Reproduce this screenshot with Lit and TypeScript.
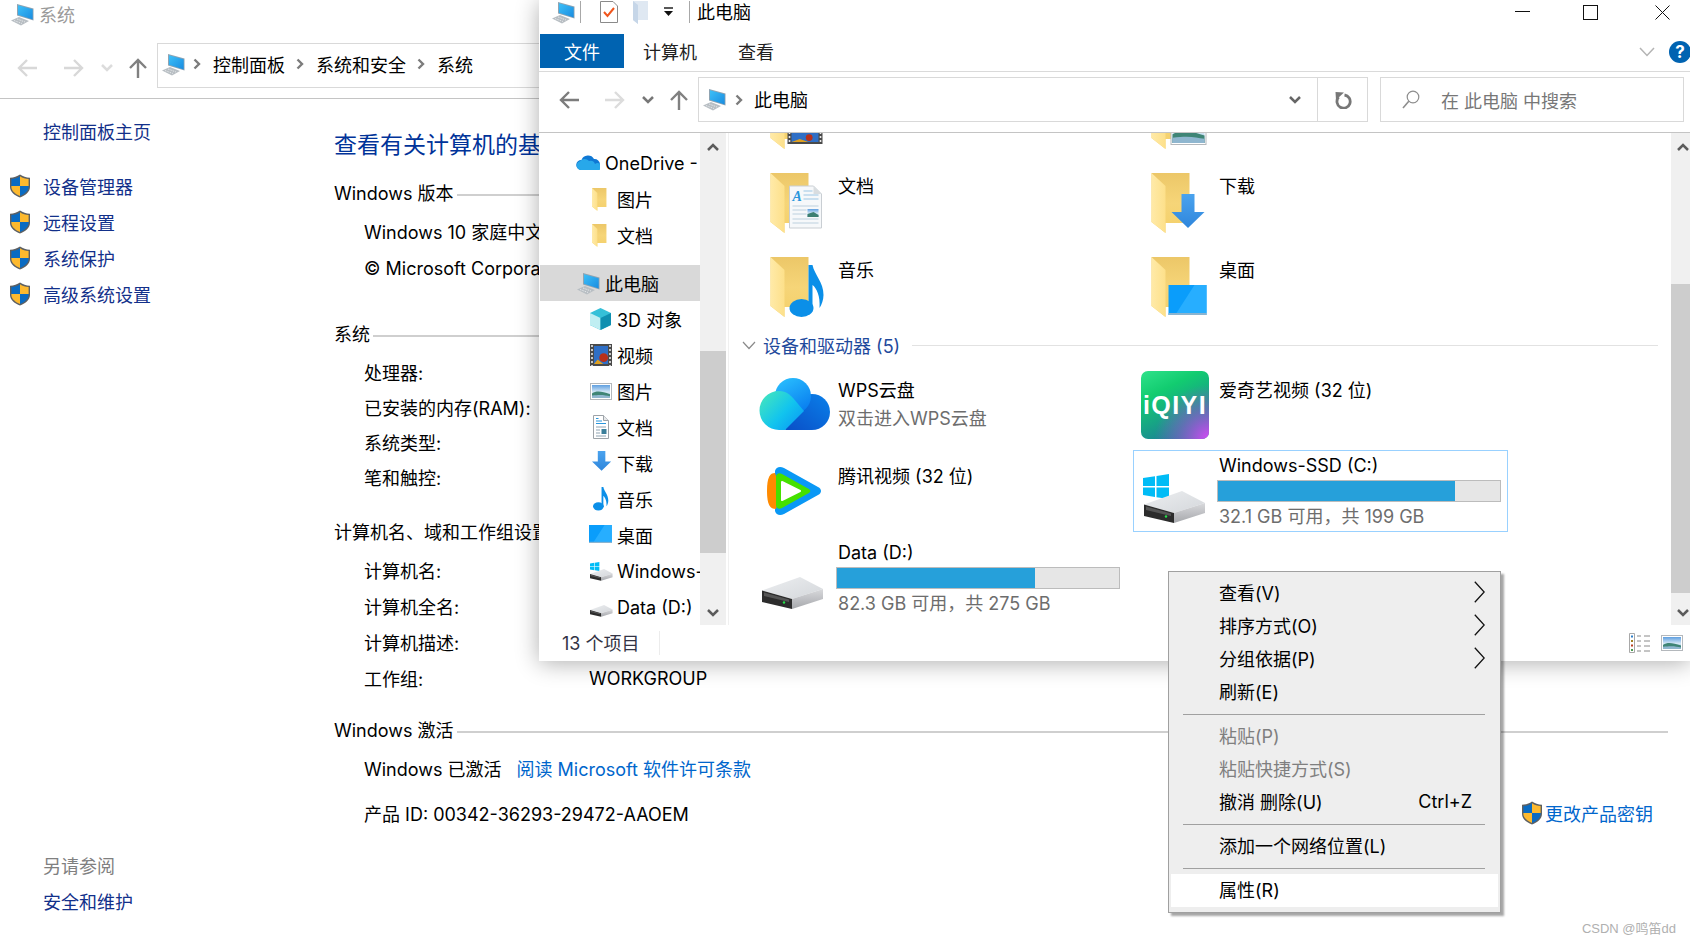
import { LitElement, html, css, svg } from 'lit';
import { customElement } from 'lit/decorators.js';

// ---- small svg pieces ----

const folderShape = (x: number, y: number, s = 1) => svg`
  <g transform="translate(${x} ${y}) scale(${s})">
    <path d="M0 0H38V50H14V60L0 49Z" fill="url(#folderBack)"/>
    <path d="M0 0L14 13V60L0 49Z" fill="url(#folderFlap)"/>
  </g>`;

const pageShape = (x: number, y: number, s = 1) => svg`
  <g transform="translate(${x} ${y}) scale(${s})">
    <path d="M0 0H24L32 8V42H0Z" fill="#f6f8fa" stroke="#c9ced3" stroke-width="1"/>
    <path d="M24 0V8H32Z" fill="#d9dde0"/>
    <text x="3" y="15" font-family="Liberation Serif" font-style="italic" font-weight="700" font-size="14" fill="#2a96dc">A</text>
    <path d="M14 5H23M14 9H29M14 13H29" stroke="#9cc6e4" stroke-width="1.2"/>
    <path d="M3 20H29M3 33H29M3 37H29" stroke="#bcd0de" stroke-width="1.2"/>
    <path d="M3 24H17M3 28H17" stroke="#bcd0de" stroke-width="1.2"/>
    <rect x="18" y="23" width="11" height="8" fill="url(#sky)"/>
    <path d="M18 28 L24 26 L29 29 V31 H18Z" fill="#3c7f72"/>
  </g>`;

const smallDoc = svg`
  <path d="M4.5 .5H14.5L19.5 5.5V23.5H4.5Z" fill="#fff" stroke="#9da3a8"/>
  <path d="M14.5 .5V5.5H19.5" fill="#e6e8ea" stroke="#9da3a8"/>
  <path d="M7 3.5H9.5M7 6H13M7 8.5H17" stroke="#2a96dc" stroke-width="1.2"/>
  <path d="M7 12H17M7 15H11M7 18H11M7 21H17" stroke="#8fa3b2" stroke-width="1"/>
  <rect x="12.5" y="14" width="5" height="5" fill="#3c7f9a"/>`;

const noteShape = (x: number, y: number, s = 1) => svg`
  <g transform="translate(${x} ${y}) scale(${s})">
    <ellipse cx="12" cy="43" rx="12" ry="9" fill="#0b8fe8"/>
    <path d="M19 43V0H23C25 10 34 17 34 30C34 35 32 40 30 43C31 31 27 23 23 20V43Z" fill="#0b8fe8"/>
  </g>`;

const arrowShape = (x: number, y: number, s = 1) => svg`
  <g transform="translate(${x} ${y}) scale(${s})">
    <path d="M10 0H23V18H33L16.5 34L0 18H10Z" fill="url(#arrowBlue)"/>
  </g>`;

const desktopShape = (x: number, y: number, s = 1) => svg`
  <g transform="translate(${x} ${y}) scale(${s})">
    <rect x="0" y="0" width="38" height="30" fill="#0a9dfb"/>
    <path d="M8 28L26 0H38V28Z" fill="#27aeff"/>
    <rect x="0" y="28" width="38" height="2" fill="#8ab4d0"/>
  </g>`;

const filmShape = (x: number, y: number, w: number, h: number) => svg`
  <g transform="translate(${x} ${y})">
    <rect width=${w} height=${h} fill="#4a4a4a"/>
    <rect x="4" y="2" width=${w - 8} height=${h - 4} fill="#2f6fc6"/>
    <path d="M4 ${h - 2}L${w * 0.35} ${h * 0.7}L${w * 0.6} ${h - 2}Z" fill="#e0a020"/>
    <circle cx=${w * 0.62} cy=${h * 0.62} r=${h * 0.2} fill="#b8301a"/>
    <path d="M2 1V${h} M${w - 2} 1V${h}" stroke="#e8e8e8" stroke-width="1.6" stroke-dasharray="2 2"/>
  </g>`;

const pictureShape = (x: number, y: number, w: number, h: number) => svg`
  <g transform="translate(${x} ${y})">
    <rect x=".5" y=".5" width=${w - 1} height=${h - 1} fill="#fff" stroke="#b4b8bc"/>
    <rect x="2" y="2" width=${w - 4} height=${h - 4} fill="url(#sky)"/>
    <path d="M2 ${h * 0.62}C${w * 0.3} ${h * 0.42} ${w * 0.55} ${h * 0.5} ${w - 2} ${h * 0.66}V${h - 2}H2Z" fill="#3f8576"/>
    <path d="M2 ${h * 0.74}C${w * 0.5} ${h * 0.66} ${w * 0.7} ${h * 0.72} ${w - 2} ${h * 0.78}V${h - 2}H2Z" fill="#8fb6cf"/>
  </g>`;

const driveShape = (x: number, y: number, s = 1, led = true) => svg`
  <g transform="translate(${x} ${y}) scale(${s})">
    <path d="M0 13.5L38 0L61 12L30 22Z" fill="url(#driveTop)"/>
    <path d="M30 22L61 12V22L30 32Z" fill="url(#driveSide)"/>
    <path d="M0 13.5L30 22V32L0 25Z" fill="#2c2c2c"/>
    <path d="M2 15.5L27 22.5V25L2 19Z" fill="#555"/>
    ${led ? svg`<circle cx="22" cy="25.5" r="1.2" fill="#25e04a"/>` : ''}
  </g>`;

const winLogo = (x: number, y: number, s = 1) => svg`
  <g transform="translate(${x} ${y}) scale(${s})" fill="#00bcf6">
    <path d="M0 4L12 2.2V12H0Z"/>
    <path d="M13.5 2L26 0V12H13.5Z"/>
    <path d="M0 13.5H12V23L0 21Z"/>
    <path d="M13.5 13.5H26V25L13.5 23.2Z"/>
  </g>`;

const cloudShape = (x: number, y: number, s = 1) => svg`
  <g transform="translate(${x} ${y}) scale(${s})">
    <path d="M5 17a5 5 0 0 1 .5-10 A7 7 0 0 1 18 6a5.5 5.5 0 0 1 6 5.5A5 5 0 0 1 20 17Z" fill="#0f78d4"/>
    <path d="M5 17a4.5 4.5 0 0 1-1-8.8A6 6 0 0 1 13 8a5 5 0 0 1 6 3 3 3 0 0 1 4.5 6Z" fill="#28a8ea"/>
  </g>`;

// monitor with keyboard, used in title bars and address bars
const pcIcon = () => html`
  <svg class="pc" width="24" height="23" viewBox="0 0 24 23">
    <path d="M1 17.5L9 14L19 18L11 22.5Z" fill="#b8bec3"/>
    <path d="M4 17.5L12 20.5M7 16L15 19" stroke="#eef0f1" stroke-width=".8" stroke-dasharray="1.5 1"/>
    <path d="M7 1L23.5 5.5V17.5L7 12.5Z" fill="#8fa3b2"/>
    <path d="M8 2.2L22.7 6.2V16.4L8 11.8Z" fill="url(#screen)"/>
  </svg>`;

const shield = () => html`
  <svg class="shield" width="22" height="24" viewBox="0 0 22 24">
    <path d="M11 .5C8 2.6 5 3.6 1 3.8V13C1 18 6 21.6 11 23.6C16 21.6 21 18 21 13V3.8C17 3.6 14 2.6 11 .5Z" fill="#5d6063"/>
    <path d="M11 2.2C8.4 3.9 5.6 4.9 2.4 5.1V12H11Z" fill="#0a6bc2"/>
    <path d="M11 2.2C13.6 3.9 16.4 4.9 19.6 5.1V12H11Z" fill="#fdb92e"/>
    <path d="M2.4 12V13C2.4 17 6.6 20.2 11 22V12Z" fill="#fdb92e"/>
    <path d="M19.6 12V13C19.6 17 15.4 20.2 11 22V12Z" fill="#0a6bc2"/>
  </svg>`;

const navArrow = (dir: 'left' | 'right' | 'up', color: string) => {
  const d = dir === 'left' ? 'M2 10H20M10 2L2 10L10 18' : dir === 'right' ? 'M0 10H18M10 2L18 10L10 18' : 'M10 20V2M2 10L10 2L18 10';
  return html`<svg class="nav-arrow" width="20" height="20" viewBox="0 0 20 20">
    <path d=${d} fill="none" stroke=${color} stroke-width="2.4"/>
  </svg>`;
};

const crumbChevron = () => html`
  <svg class="crumb" width="8" height="12" viewBox="0 0 8 12">
    <path d="M1.5 1.5L6 6L1.5 10.5" fill="none" stroke="#7c7c7c" stroke-width="2.4"/>
  </svg>`;

const boldChevron = (up = false, color = '#666') => html`
  <svg width="12" height="8" viewBox="0 0 12 8">
    <path d=${up ? 'M1 7L6 2L11 7' : 'M1 1L6 6L11 1'} fill="none" stroke=${color} stroke-width="2.5"/>
  </svg>`;

const small = (content: unknown) => html`<svg class="small" width="24" height="24" viewBox="0 0 24 24">${content}</svg>`;

// scrollbar: thumb position comes from the arguments
const scrollbar = (cls: string, thumbTop: number, thumbHeight: number) => html`
  <div class="sb ${cls}">
    <div class="sb-btn">${boldChevron(true, '#5c5c5c')}</div>
    <div class="sb-thumb" style="margin-top:${thumbTop}px;height:${thumbHeight}px"></div>
    <div class="sb-btn sb-end">${boldChevron(false, '#5c5c5c')}</div>
  </div>`;

// ---- data ----

const backSections = [
  { title: 'Windows 版本', cls: 's-ver', rows: [['Windows 10 家庭中文版', ''], ['© Microsoft Corporation。保留所有权利。', '']] },
  { title: '系统', cls: 's-sys', tight: true, rows: [['处理器:', ''], ['已安装的内存(RAM):', ''], ['系统类型:', ''], ['笔和触控:', '']] },
  { title: '计算机名、域和工作组设置', cls: 's-name', rows: [['计算机名:', ''], ['计算机全名:', ''], ['计算机描述:', ''], ['工作组:', 'WORKGROUP']] },
];

const navItems = [
  { label: 'OneDrive - Personal', lvl: 1, icon: cloudShape(0, 2) },
  { label: '图片', lvl: 2, icon: folderShape(3, 1, 0.38) },
  { label: '文档', lvl: 2, icon: folderShape(3, 1, 0.38) },
  { label: '此电脑', lvl: 1, pc: true, active: true, gapBefore: true },
  { label: '3D 对象', lvl: 2, icon: svg`
    <path d="M11.5 1L22 6V18L11.5 23L1 18V6Z" fill="#35c0d8"/>
    <path d="M1 6L11.5 11V23L1 18Z" fill="#bfeef2"/>
    <path d="M22 6L11.5 11V23L22 18Z" fill="#0f8fb0"/>` },
  { label: '视频', lvl: 2, icon: filmShape(1, 1, 22, 22) },
  { label: '图片', lvl: 2, icon: pictureShape(1, 4, 22, 17) },
  { label: '文档', lvl: 2, icon: smallDoc },
  { label: '下载', lvl: 2, icon: arrowShape(3, 0, 0.58) },
  { label: '音乐', lvl: 2, icon: noteShape(4, 0, 0.45) },
  { label: '桌面', lvl: 2, icon: desktopShape(0, 2, 0.6) },
  { label: 'Windows-SSD (C:)', lvl: 2, icon: svg`${winLogo(1, 3, 0.36)}${driveShape(1, 10, 0.37, false)}` },
  { label: 'Data (D:)', lvl: 2, icon: driveShape(1, 10, 0.37, false) },
];

const folderTiles = [
  { name: '', overlay: filmShape(17, 38, 35, 17) },
  { name: '', overlay: pictureShape(19, 28, 36, 28) },
  { name: '文档', overlay: pageShape(19, 13) },
  { name: '下载', overlay: arrowShape(20, 21) },
  { name: '音乐', overlay: noteShape(19, 8) },
  { name: '桌面', overlay: desktopShape(17, 28) },
];

const wpsIcon = svg`
  <g transform="translate(6 13)">
    <circle cx="53" cy="34" r="18" fill="url(#wpsRight)"/>
    <path d="M34 35H53V52H26Z" fill="url(#wpsRight)"/>
    <circle cx="34" cy="18" r="18" fill="url(#wpsTop)"/>
    <path d="M20 13C28 13 31 17 34 20L45 33L26 52H20A19.5 19.5 0 0 1 20 13Z" fill="url(#wpsLeft)"/>
  </g>`;

const tencentIcon = svg`
  <g transform="translate(14 16)">
    <path d="M8 4C9 0 13 -1 17 1L51 20C55 22 55 26 51 28L17 47C13 49 9 48 8 44Z" fill="#0a98f5"/>
    <path d="M8 6C3 6 0 10 0 24C0 38 3 42 9 42L14 24Z" fill="#ff8a00"/>
    <path d="M9 10C9 7 12 5 15 7L41 21.5C44 23 44 25 41 26.5L15 41C12 43 9 41 9 38Z" fill="#45e000"/>
    <path d="M15 15L33 24L15 33Z" fill="#fff" stroke="#fff" stroke-width="2" stroke-linejoin="round"/>
  </g>`;

const iqiyiIcon = svg`
  <g transform="translate(7 6)">
    <rect width="68" height="68" rx="7" fill="url(#iqBase)"/>
    <rect width="68" height="68" rx="7" fill="url(#iqPink)"/>
    <text x="34" y="43" text-anchor="middle" font-family="Liberation Sans" font-weight="700" font-size="25" letter-spacing="1.4" fill="#fff">iQIYI</text>
  </g>`;

const devices = [
  { name: 'WPS云盘', sub: '双击进入WPS云盘', icon: wpsIcon },
  { name: '爱奇艺视频 (32 位)', icon: iqiyiIcon },
  { name: '腾讯视频 (32 位)', icon: tencentIcon },
  { name: 'Windows-SSD (C:)', free: 32.1, total: 199, selected: true, icon: svg`${winLogo(9, 23)}${driveShape(10, 40)}` },
  { name: 'Data (D:)', free: 82.3, total: 275, icon: driveShape(9, 39) },
];

const menuItems: any[] = [
  { label: '查看(V)', sub: true },
  { label: '排序方式(O)', sub: true },
  { label: '分组依据(P)', sub: true },
  { label: '刷新(E)' },
  { sep: true },
  { label: '粘贴(P)', off: true },
  { label: '粘贴快捷方式(S)', off: true },
  { label: '撤消 删除(U)', key: 'Ctrl+Z' },
  { sep: true },
  { label: '添加一个网络位置(L)' },
  { sep: true },
  { label: '属性(R)', hot: true },
];

@customElement('app-root')
export class AppRoot extends LitElement {
  static styles = css`
    :host {
      display: block;
      position: relative;
      width: 1690px;
      height: 944px;
      overflow: hidden;
      background: #fff;
      color: #000;
      font-family: Inter, 'Noto Sans CJK SC', sans-serif;
      font-size: 18px;
    }
    svg { display: block; flex: none; }
    .defs { width: 0; height: 0; }

    /* system window behind */
    .back { display: flex; flex-direction: column; width: 1690px; height: 944px; }
    .back-title { height: 30px; box-sizing: border-box; padding: 0 0 2px 10px; display: flex; align-items: center; gap: 5px; color: #9a9a9a; }
    .back-nav { height: 69px; box-sizing: border-box; border-bottom: 1px solid #c4c4c4; display: flex; align-items: flex-start; padding: 13px 0 0 17px; }
    .back-nav .nav-arrow { margin-top: 15px; }
    .back-nav .gap1 { margin-left: 27px; }
    .back-nav .down { margin: 21px 0 0 17px; }
    .back-nav .up { margin-left: 15px; }
    .crumbs { width: 1400px; height: 45px; box-sizing: border-box; margin-left: 9px; border: 1px solid #d9d9d9; display: flex; align-items: center; padding: 0 0 3px 3px; }
    .crumbs .crumb { margin: 0 12px 0 8px; }
    .crumbs span + .crumb { margin-left: 11px; }
    .back-body { flex: 1; display: grid; grid-template-columns: 334px 1fr; }

    .side { display: flex; flex-direction: column; padding-bottom: 25px; color: #12308a; }
    .side-item { height: 36px; display: flex; align-items: center; padding-left: 43px; }
    .side-home { margin-top: 14px; margin-bottom: 19px; }
    .side-shield { padding-left: 9px; gap: 12px; }
    .side-foot { margin-top: auto; }
    .side-muted { color: #808080; }

    .main { padding: 25px 22px 0 0; }
    .heading { height: 40px; line-height: 42px; font-size: 23px; color: #003399; white-space: nowrap; overflow: hidden; }
    .sect { height: 36px; display: flex; align-items: center; gap: 3px; white-space: nowrap; }
    .sect i { flex: 1; height: 2px; background: #cfcfcf; margin-top: 6px; }
    .s-ver { margin-top: 10px; }
    .s-sys { margin-top: 30px; }
    .s-name { margin-top: 19px; }
    .s-act { margin-top: 15px; }
    .rows { padding-left: 30px; margin-top: 3px; }
    .row { height: 36px; display: flex; align-items: center; white-space: nowrap; }
    .row .lab { width: 225px; }
    .rows.tight .row { height: 35px; }
    .rows.act { margin-top: 3px; }
    .row.id { margin-top: 9px; justify-content: space-between; padding-right: 15px; }
    .link { color: #0066cc; }
    .row .link-first { margin-left: 15px; }
    .change { display: flex; align-items: center; gap: 2px; }

    /* explorer window */
    .win {
      position: absolute; left: 539px; top: 0; width: 1151px; height: 661px;
      background: #fff; box-shadow: 0 2px 22px rgba(0, 0, 0, .32);
      display: flex; flex-direction: column; overflow: hidden;
    }
    .tbar { height: 34px; flex: none; box-sizing: border-box; padding: 0 0 10px 12px; display: flex; align-items: center; }
    .vline { width: 1px; height: 22px; background: #a8a8a8; flex: none; }
    .tbar .pc + .vline { margin-left: 5px; }
    .tbar .qa-doc { margin-left: 19px; }
    .tbar .qa-folder { margin-left: 15px; }
    .tbar .qa-drop { margin-left: 14px; }
    .tbar .qa-drop + .vline { margin-left: 15px; }
    .tbar .title { margin: 0 0 2px 7px; }
    .ctrls { margin-left: auto; display: flex; align-items: center; gap: 55px; padding-right: 20px; }
    .ctrls .max { margin: 0 2px 0 -2px; }

    .ribbon { height: 38px; flex: none; box-sizing: border-box; border-bottom: 1px solid #dadada; display: flex; align-items: flex-start; padding-left: 1px; color: #222; }
    .tab { height: 34px; line-height: 37px; padding: 0 20px; }
    .tab-file { width: 84px; box-sizing: border-box; padding: 0; text-align: center; background: #0063b1; color: #fff; }
    .tab-first { padding: 0 21px 0 19px; }
    .rib-right { margin-left: auto; display: flex; align-items: center; gap: 14px; margin-top: 7px; margin-right: -1px; }
    .help { width: 22px; height: 22px; border-radius: 50%; background: #0063b1; color: #fff; font-size: 17px; font-weight: 700; line-height: 22px; text-align: center; }

    .addr { height: 61px; flex: none; box-sizing: border-box; border-bottom: 1px solid #c4c4c4; display: flex; align-items: flex-start; padding: 5px 0 0 20px; }
    .addr .nav-arrow { margin-top: 13px; }
    .addr .a-fwd { margin-left: 26px; }
    .addr .a-down { margin: 19px 0 0 17px; }
    .addr .a-up { margin-left: 15px; }
    .addr-box { width: 670px; height: 45px; margin-left: 9px; box-sizing: border-box; border: 1px solid #d9d9d9; display: flex; align-items: center; padding-left: 3px; }
    .addr-box .crumb { margin: 0 11px 0 9px; }
    .addr-box .here { margin-bottom: 2px; }
    .addr-end { margin-left: auto; display: flex; align-items: center; height: 100%; }
    .addr-drop { margin-right: 16px; }
    .addr-refresh { width: 49px; height: 100%; border-left: 1px solid #d9d9d9; display: flex; align-items: center; justify-content: center; }
    .search { width: 304px; height: 45px; margin-left: 12px; box-sizing: border-box; border: 1px solid #d9d9d9; display: flex; align-items: center; padding-left: 21px; gap: 21px; color: #777; white-space: pre; }

    .body { flex: 1; min-height: 0; display: flex; }
    .tree { width: 160px; flex: none; margin-left: 1px; padding-top: 12px; box-sizing: border-box; overflow: hidden; }
    .node { height: 36px; display: flex; align-items: center; white-space: nowrap; }
    .lvl1 { padding-left: 36px; gap: 5px; }
    .lvl2 { padding-left: 49px; gap: 4px; }
    .node.on { background: #d9d9d9; }
    .node.spaced { margin-top: 12px; }

    .sb { flex: none; display: flex; flex-direction: column; background: #f0f0f0; }
    .sb-nav { width: 26px; }
    .sb-main { width: 19px; }
    .sb-main .sb-btn { padding-left: 5px; }
    .sb-btn { height: 28px; flex: none; display: flex; align-items: center; justify-content: center; }
    .sb-thumb { flex: none; background: #cdcdcd; }
    .sb-end { margin-top: auto; padding-top: 3px; box-sizing: border-box; }
    .pane-line { width: 1px; flex: none; margin-left: 2px; background: #f0f0f0; }

    .content { flex: 1; min-width: 0; overflow: hidden; }
    .tiles { display: grid; grid-template-columns: 375px 375px; column-gap: 6px; padding-left: 23px; }
    .tiles.folders { grid-auto-rows: 84px; margin-top: -57px; }
    .tiles.devs { grid-auto-rows: 82px; row-gap: 4px; margin-top: 6px; }
    .tiles.devs .tile:last-child { margin-top: 1px; }
    .tile { box-sizing: border-box; border: 1px solid transparent; display: flex; white-space: nowrap; }
    .tile.sel { border-color: #99d1ff; }
    .tile svg.big { width: 85px; height: 82px; }
    .t-text { flex: 1; min-width: 0; padding-top: 12px; }
    .t-text.has-bar { padding-top: 1px; }
    .t-name { height: 28px; line-height: 28px; }
    .t-sub { height: 28px; line-height: 28px; color: #6d6d6d; }
    .has-bar .t-sub { height: 24px; line-height: 24px; margin-top: 3px; }
    .bar { width: 284px; height: 22px; margin: 0 0 0 -2px; box-sizing: border-box; border: 1px solid #bcbcbc; background: #e6e6e6; }
    .bar i { display: block; height: 100%; background: #26a0da; }
    .group { height: 26px; margin: 4px 0 0 0; padding-left: 13px; display: flex; align-items: center; color: #1f4a9c; white-space: nowrap; }
    .group span { margin-left: 7px; }
    .group i { flex: 1; height: 1px; background: #e2e2e2; margin: 0 13px 0 12px; }

    .status { height: 36px; flex: none; box-sizing: border-box; display: flex; align-items: center; padding: 0 7px 0 23px; color: #334; }
    .status .count { margin-bottom: 2px; }
    .status .sdiv { width: 1px; height: 24px; background: #ececec; margin-left: 19px; }
    .status .views { margin-left: auto; display: flex; align-items: center; gap: 10px; }

    /* context menu */
    .menu {
      position: absolute; left: 1168px; top: 571px; width: 333px; box-sizing: border-box;
      border: 1px solid #a0a0a0; background: #eee; padding: 5px 2px;
      box-shadow: 3px 3px 2px rgba(0, 0, 0, .35);
    }
    .mi { height: 33px; box-sizing: border-box; display: flex; align-items: center; padding: 0 26px 3px 48px; white-space: nowrap; }
    .mi.off { color: #7f7f7f; }
    .mi.hot { background: #fff; }
    .mi .mkey { margin-left: auto; }
    .mi svg { margin-left: auto; margin-right: -13px; }
    .msep { height: 1px; margin: 5px 13px 5px 12px; background: #a0a0a0; }

    .mark { position: absolute; right: 14px; top: 918px; font-size: 13px; color: #b0b0b0; font-family: 'Liberation Sans', 'Noto Sans CJK SC', sans-serif; }
  `;

  private renderDefs() {
    return html`<svg class="defs" aria-hidden="true">
      <defs>
        <linearGradient id="folderBack" x1="0" y1="0" x2="0" y2="1"><stop offset="0" stop-color="#ecc768"/><stop offset=".5" stop-color="#f6d578"/><stop offset="1" stop-color="#f4d06a"/></linearGradient>
        <linearGradient id="folderFlap" x1="0" y1="0" x2="1" y2="0"><stop offset="0" stop-color="#ffeaa8"/><stop offset="1" stop-color="#fde08a"/></linearGradient>
        <linearGradient id="sky" x1="0" y1="0" x2="0" y2="1"><stop offset="0" stop-color="#5f9fe0"/><stop offset=".55" stop-color="#d6e8f6"/><stop offset="1" stop-color="#7fb0d0"/></linearGradient>
        <linearGradient id="arrowBlue" x1="0" y1="0" x2="0" y2="1"><stop offset="0" stop-color="#4aa3ee"/><stop offset="1" stop-color="#2f86dc"/></linearGradient>
        <linearGradient id="driveTop" x1="0" y1="0" x2="1" y2="1"><stop offset="0" stop-color="#eceef0"/><stop offset="1" stop-color="#d4d7db"/></linearGradient>
        <linearGradient id="driveSide" x1="0" y1="0" x2="0" y2="1"><stop offset="0" stop-color="#d8d9dc"/><stop offset="1" stop-color="#a6a8ac"/></linearGradient>
        <linearGradient id="screen" x1="0" y1="0" x2="1" y2="1"><stop offset="0" stop-color="#3dc0f8"/><stop offset="1" stop-color="#1a8ce0"/></linearGradient>
        <linearGradient id="wpsRight" gradientUnits="userSpaceOnUse" x1="60" y1="15" x2="30" y2="52"><stop offset="0" stop-color="#0a7be6"/><stop offset="1" stop-color="#0a50c8"/></linearGradient>
        <linearGradient id="wpsTop" x1="0" y1="0" x2=".6" y2="1"><stop offset="0" stop-color="#2cc4ff"/><stop offset="1" stop-color="#0a80f0"/></linearGradient>
        <linearGradient id="wpsLeft" x1="0" y1="0" x2="1" y2=".8"><stop offset="0" stop-color="#4aeab8"/><stop offset=".6" stop-color="#12c4ee"/><stop offset="1" stop-color="#0a9cf4"/></linearGradient>
        <linearGradient id="iqBase" x1="0" y1="0" x2=".5" y2="1"><stop offset="0" stop-color="#2fe28a"/><stop offset=".35" stop-color="#12cc70"/><stop offset="1" stop-color="#1c7f98"/></linearGradient>
        <radialGradient id="iqPink" cx="1" cy="1" r=".8"><stop offset="0" stop-color="#d848f8"/><stop offset=".55" stop-color="#8a60c8" stop-opacity=".6"/><stop offset="1" stop-color="#8a60c8" stop-opacity="0"/></radialGradient>
      </defs>
    </svg>`;
  }

  private renderBack() {
    return html`<div class="back">
      <div class="back-title">${pcIcon()}<span>系统</span></div>
      <div class="back-nav">
        ${navArrow('left', '#d8d8d8')}
        <span class="gap1">${navArrow('right', '#d8d8d8')}</span>
        <span class="down">${boldChevron(false, '#dcdcdc')}</span>
        <span class="up">${navArrow('up', '#808080')}</span>
        <div class="crumbs">
          ${pcIcon()}${crumbChevron()}<span>控制面板</span>${crumbChevron()}<span>系统和安全</span>${crumbChevron()}<span>系统</span>
        </div>
      </div>
      <div class="back-body">
        <div class="side">
          <div class="side-item side-home">控制面板主页</div>
          ${['设备管理器', '远程设置', '系统保护', '高级系统设置'].map(
            (t) => html`<div class="side-item side-shield">${shield()}<span>${t}</span></div>`
          )}
          <div class="side-item side-foot side-muted">另请参阅</div>
          <div class="side-item">安全和维护</div>
        </div>
        <div class="main">
          <div class="heading">查看有关计算机的基本信息</div>
          ${backSections.map(
            (s) => html`
              <div class="sect ${s.cls}"><span>${s.title}</span><i></i></div>
              <div class="rows ${s.tight ? 'tight' : ''}">
                ${s.rows.map(
                  (r) => html`<div class="row">${r[1] ? html`<span class="lab">${r[0]}</span><span>${r[1]}</span>` : html`<span>${r[0]}</span>`}</div>`
                )}
              </div>`
          )}
          <div class="sect s-act"><span>Windows 激活</span><i></i></div>
          <div class="rows act">
            <div class="row"><span>Windows 已激活</span><span class="link link-first">阅读 Microsoft 软件许可条款</span></div>
            <div class="row id">
              <span>产品 ID: 00342-36293-29472-AAOEM</span>
              <span class="link change">${shield()}更改产品密钥</span>
            </div>
          </div>
        </div>
      </div>
    </div>`;
  }

  private renderWindow() {
    return html`<div class="win">
      <div class="tbar">
        ${pcIcon()}
        <div class="vline"></div>
        <svg class="qa-doc" width="18" height="22" viewBox="0 0 18 22">
          <path d="M.5 .5H13L17.5 5V21.5H.5Z" fill="#fff" stroke="#8a8a8a"/>
          <path d="M4 11L7.5 15L14 7" fill="none" stroke="#f0561d" stroke-width="2"/>
        </svg>
        <svg class="qa-folder" width="16" height="23" viewBox="0 0 16 23">
          <path d="M0 0H15V19H5V23L0 19Z" fill="#dfe8f2"/>
          <path d="M0 0L5 4V23L0 19Z" fill="#c6d6e8"/>
        </svg>
        <svg class="qa-drop" width="11" height="10" viewBox="0 0 11 10">
          <path d="M1 1H10" stroke="#111" stroke-width="1.4"/>
          <path d="M1 4H10L5.5 9Z" fill="#111"/>
        </svg>
        <div class="vline"></div>
        <span class="title">此电脑</span>
        <div class="ctrls">
          <svg width="15" height="15" viewBox="0 0 15 15"><path d="M0 6.5H15" stroke="#111" stroke-width="1"/></svg>
          <svg class="max" width="15" height="15" viewBox="0 0 15 15"><rect x=".5" y=".5" width="14" height="14" fill="none" stroke="#111"/></svg>
          <svg width="15" height="15" viewBox="0 0 15 15"><path d="M.5 .5L14.5 14.5M14.5 .5L.5 14.5" stroke="#111" stroke-width="1"/></svg>
        </div>
      </div>
      <div class="ribbon">
        <div class="tab tab-file">文件</div>
        <div class="tab tab-first">计算机</div>
        <div class="tab">查看</div>
        <div class="rib-right">
          <svg width="16" height="10" viewBox="0 0 16 10"><path d="M1 1L8 8.5L15 1" fill="none" stroke="#b4b4b4" stroke-width="1.5"/></svg>
          <div class="help">?</div>
        </div>
      </div>
      <div class="addr">
        ${navArrow('left', '#7c7c7c')}
        <span class="a-fwd">${navArrow('right', '#dcdcdc')}</span>
        <span class="a-down">${boldChevron(false, '#777')}</span>
        <span class="a-up">${navArrow('up', '#808080')}</span>
        <div class="addr-box">
          ${pcIcon()}${crumbChevron()}<span class="here">此电脑</span>
          <div class="addr-end">
            <span class="addr-drop">${boldChevron(false, '#666')}</span>
            <div class="addr-refresh">
              <svg width="18" height="19" viewBox="0 0 18 19">
                <path d="M10.5 5A6.6 6.6 0 1 1 4.6 7.2" fill="none" stroke="#777" stroke-width="2.8"/>
                <path d="M1.5 2L10 2.5L2 10Z" fill="#777"/>
              </svg>
            </div>
          </div>
        </div>
        <div class="search">
          <svg width="18" height="19" viewBox="0 0 18 19">
            <circle cx="11" cy="7" r="5.8" fill="none" stroke="#8d8d8d" stroke-width="1.2"/>
            <path d="M6.8 11.2L1 18" stroke="#8d8d8d" stroke-width="1.6"/>
          </svg>
          <span>在 此电脑 中搜索</span>
        </div>
      </div>
      <div class="body">
        <div class="tree">
          ${navItems.map(
            (n) => html`<div class="node lvl${n.lvl} ${n.active ? 'on' : ''} ${n.gapBefore ? 'spaced' : ''}">
              ${n.pc ? pcIcon() : small(n.icon)}<span>${n.label}</span>
            </div>`
          )}
        </div>
        ${scrollbar('sb-nav', 190, 202)}
        <div class="pane-line"></div>
        <div class="content">
          <div class="tiles folders">
            ${folderTiles.map(
              (t) => html`<div class="tile">
                <svg class="big" viewBox="0 0 85 82">${folderShape(17.5, 12)}<g transform="translate(17.5 12)">${t.overlay}</g></svg>
                <div class="t-text"><div class="t-name">${t.name}</div></div>
              </div>`
            )}
          </div>
          <div class="group">
            <svg width="14" height="9" viewBox="0 0 14 9"><path d="M1 1L7 7.5L13 1" fill="none" stroke="#8a8a8a" stroke-width="1.2"/></svg>
            <span>设备和驱动器 (5)</span><i></i>
          </div>
          <div class="tiles devs">
            ${devices.map((d) => {
              const used = d.total ? ((d.total - (d.free as number)) / d.total) * 100 : 0;
              return html`<div class="tile ${d.selected ? 'sel' : ''}">
                <svg class="big" viewBox="0 0 85 82">${d.icon}</svg>
                <div class="t-text ${d.total ? 'has-bar' : ''}">
                  <div class="t-name">${d.name}</div>
                  ${d.total ? html`<div class="bar"><i style="width:${used}%"></i></div>
                    <div class="t-sub">${d.free} GB 可用，共 ${d.total} GB</div>` : ''}
                  ${d.sub ? html`<div class="t-sub">${d.sub}</div>` : ''}
                </div>
              </div>`;
            })}
          </div>
        </div>
        ${scrollbar('sb-main', 123, 309)}
      </div>
      <div class="status">
        <span class="count">13 个项目</span><div class="sdiv"></div>
        <div class="views">
          <svg width="22" height="20" viewBox="0 0 22 20">
            <path d="M.5 .5H5.5V19.5H.5Z" fill="#fff" stroke="#a8a8a8"/>
            <rect x="2" y="2.5" width="2" height="2" fill="#2f7fc8"/><rect x="2" y="7" width="2" height="2" fill="#a08020"/>
            <rect x="2" y="11.5" width="2" height="2" fill="#b84020"/><rect x="2" y="16" width="2" height="2" fill="#4a9a50"/>
            <path d="M8 3H12M15 3H21M8 8H12M15 8H21M8 13H12M15 13H21M8 18H12M15 18H21" stroke="#8a8a8a" stroke-width="1"/>
          </svg>
          <svg width="22" height="16" viewBox="0 0 22 16">${pictureShape(0, 0, 22, 16)}</svg>
        </div>
      </div>
    </div>`;
  }

  private renderMenu() {
    return html`<div class="menu">
      ${menuItems.map((m) =>
        m.sep
          ? html`<div class="msep"></div>`
          : html`<div class="mi ${m.off ? 'off' : ''} ${m.hot ? 'hot' : ''}">
              <span>${m.label}</span>
              ${m.key ? html`<span class="mkey">${m.key}</span>` : ''}
              ${m.sub ? html`<svg width="11" height="22" viewBox="0 0 11 22"><path d="M.8 .8L10.2 11L.8 21.2" fill="none" stroke="#111" stroke-width="1.3"/></svg>` : ''}
            </div>`
      )}
    </div>`;
  }

  render() {
    return html`
      ${this.renderDefs()}
      ${this.renderBack()}
      ${this.renderWindow()}
      ${this.renderMenu()}
      <div class="mark">CSDN @鸣笛dd</div>
    `;
  }
}
